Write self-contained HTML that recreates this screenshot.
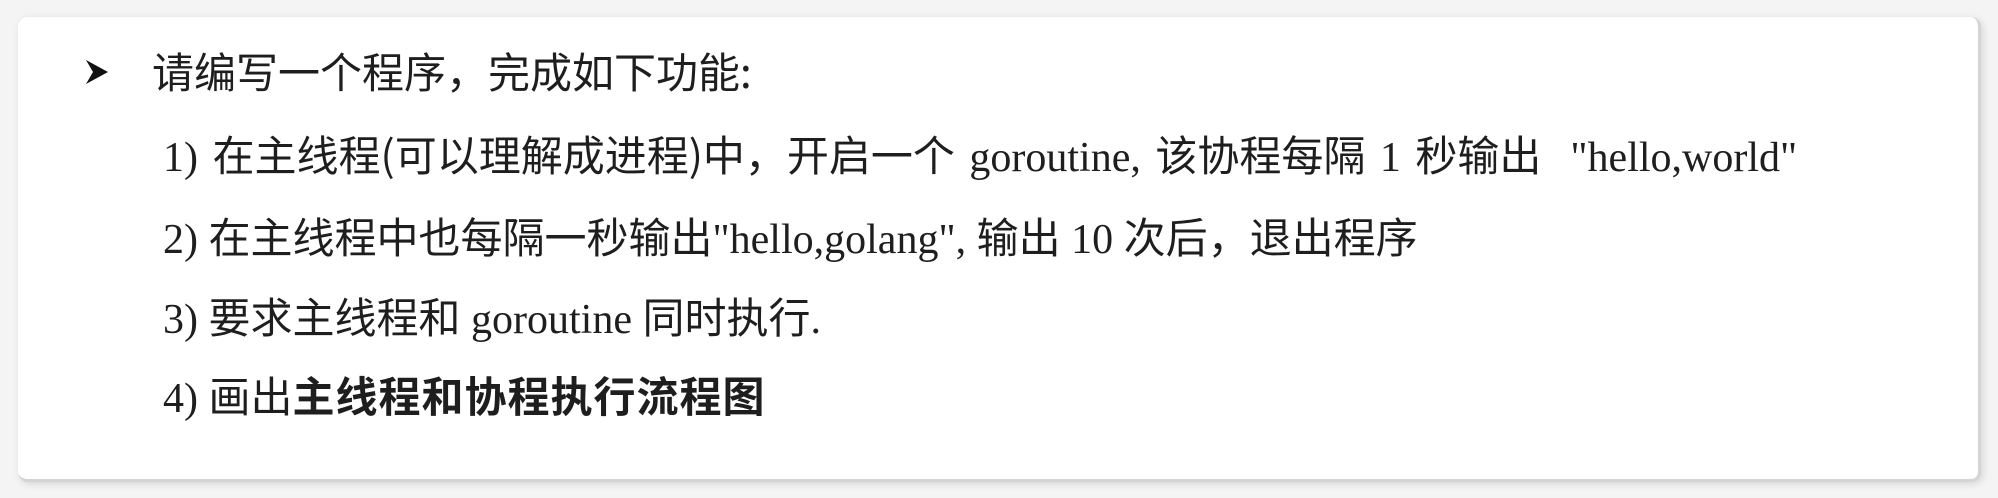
<!DOCTYPE html>
<html><head><meta charset="utf-8"><style>
html,body{margin:0;padding:0;width:1998px;height:498px;background:#f4f4f4;overflow:hidden}
.card{position:absolute;left:18px;top:17px;width:1960px;height:462px;background:#fff;border-radius:10px;border-right:3px solid #d4d4d4;border-bottom:3px solid #d4d4d4;box-shadow:2px 2px 8px rgba(0,0,0,0.12)}
.l{position:absolute;white-space:nowrap;font-family:"Liberation Serif","Noto Sans CJK SC",serif;font-size:42px;color:#1e1e1e;line-height:1}
.c{font-family:"Noto Sans CJK SC","WenQuanYi Zen Hei",sans-serif;font-weight:400}
.b{font-weight:700;letter-spacing:1px}
</style></head><body>
<div class="card"></div>
<svg style="position:absolute;left:84px;top:58px" width="26" height="28" viewBox="0 0 26 28"><path d="M2 2 L24 14 L2 26 L9 14 Z" fill="#111"/></svg>
<div class="l c" style="left:152px;top:50px">请编写一个程序，完成如下功能:</div>
<div class="l" style="left:163px;top:133px;word-spacing:4px">1)&nbsp;<span class="c">在主线程(可以理解成进程)中，开启一个</span> goroutine, <span class="c">该协程每隔</span> 1 <span class="c">秒输出</span>&nbsp; "hello,world"</div>
<div class="l" style="left:163px;top:215px">2)&nbsp;<span class="c">在主线程中也每隔一秒输出</span>"hello,golang", <span class="c">输出</span> 10 <span class="c">次后，退出程序</span></div>
<div class="l" style="left:163px;top:295px">3)&nbsp;<span class="c">要求主线程和</span> goroutine <span class="c">同时执行</span>.</div>
<div class="l" style="left:163px;top:374px">4)&nbsp;<span class="c">画出</span><span class="c b">主线程和协程执行流程图</span></div>
</body></html>
